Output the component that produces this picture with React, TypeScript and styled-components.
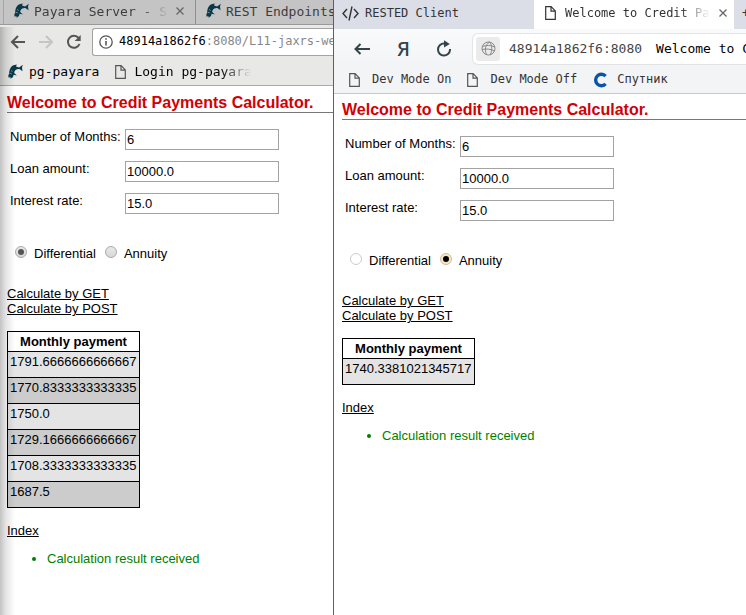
import React, { useState } from "react";
import styled, { createGlobalStyle, css } from "styled-components";

const mono = '"DejaVu Sans Mono", "Liberation Mono", monospace';
const sans = '"Liberation Sans", Arial, sans-serif';

const GlobalStyle = createGlobalStyle`
  * { box-sizing: border-box; }
  body { margin: 0; background: #fff; color: #000; font: 13px/15px ${sans}; }
  button { border: 0; padding: 0; background: none; color: inherit; font: inherit; }
  svg { display: block; flex: none; }
`;

const Desktop = styled.main`
  display: grid;
  grid-template-columns: minmax(0, 333fr) minmax(0, 413fr);
  min-height: 100vh;
  overflow: hidden;
`;

const Window = styled.section<{ $front?: boolean }>`
  min-width: 0;
  overflow: hidden;
  background: #fff;
  ${(p) =>
    p.$front
      ? css`border-left: 1px solid #5f5f5f;`
      : css`
          position: relative;
          &::after {
            content: "";
            position: absolute;
            inset: 27px auto 0 0;
            width: 15px;
            pointer-events: none;
            background: linear-gradient(to right, rgba(0, 0, 0, 0.24), rgba(0, 0, 0, 0.1) 40%, transparent);
          }
        `}
`;

const Bar = styled.div`
  display: flex;
  align-items: center;
  white-space: nowrap;
  overflow: hidden;
  font-family: ${mono};
`;

const PlainTabs = styled(Bar)`
  height: 25px;
  padding-left: 3px;
  align-items: stretch;
  background: #c4c4c4;
  border-bottom: 1px solid #999;
  color: #3d3d3d;
  font-size: 13px;
`;

const PlainTab = styled.div<{ $first?: boolean }>`
  display: flex;
  align-items: center;
  flex: none;
  gap: 3px;
  width: 193px;
  padding: 0 11px 2px 10px;
  border-right: 1px solid #909090;
  border-left: ${(p) => (p.$first ? "1px solid #a5a5a5" : "0")};
`;

const FadeText = styled.span<{ $width: number }>`
  width: ${(p) => p.$width}px;
  flex: none;
  overflow: hidden;
  mask-image: linear-gradient(to right, #000 calc(100% - 30px), transparent);
`;

const CloseButton = styled.button`
  display: grid;
  place-items: center;
  margin-left: auto;
  color: #666;
`;

const PlainToolbar = styled(Bar)`
  height: 33px;
  padding-left: 10px;
  gap: 12px;
  background: #e8e8e6;
  color: #555;
`;

const PlainAddress = styled.div`
  display: flex;
  align-items: center;
  gap: 6px;
  flex: 1 0 auto;
  height: 28px;
  margin-left: -2px;
  padding-left: 6px;
  background: #fff;
  border: 1px solid #a3a3a3;
  border-right: 0;
  border-radius: 3px 0 0 3px;
  color: #888;
  font-size: 12px;
  b { color: #000; font-weight: 400; }
`;

const PlainBookmarks = styled(Bar)`
  height: 28px;
  padding-left: 8px;
  gap: 16px;
  background: #e8e8e6;
  border-bottom: 1px solid #aaa;
  font-size: 13px;
`;

const Bookmark = styled.a<{ $gap: number }>`
  display: flex;
  align-items: center;
  gap: ${(p) => p.$gap}px;
  color: inherit;
  text-decoration: none;
  svg { color: #555; }
`;

const FrontTabs = styled(Bar)`
  height: 29px;
  background: #dcdee7;
  color: #333;
  font-size: 12px;
`;

const FrontTab = styled.div<{ $active?: boolean }>`
  display: flex;
  align-items: center;
  flex: none;
  align-self: stretch;
  gap: ${(p) => (p.$active ? 9 : 6)}px;
  width: 200px;
  padding: 0 16px 3px ${(p) => (p.$active ? 11 : 8)}px;
  background: ${(p) => (p.$active ? "#fff" : "transparent")};
`;

const NewTab = styled.button`
  padding: 0 0 3px 8px;
`;

const FrontToolbar = styled(Bar)`
  height: 37px;
  padding: 2px 0 0 20px;
  background: linear-gradient(#f9fafb, #f3f4f6);
  color: #33444a;
  gap: 26px;
`;

const FrontAddress = styled.div`
  display: flex;
  align-items: center;
  flex: 1 0 auto;
  height: 32px;
  margin-left: -6px;
  padding-left: 3px;
  background: #fff;
  border: 1px solid #e3e4e6;
  border-right: 0;
  border-radius: 6px 0 0 6px;
  color: #444;
  font-size: 13px;
  b { margin-left: 14px; color: #000; font-weight: 400; }
`;

const SiteBadge = styled.button`
  display: grid;
  place-items: center;
  width: 24px;
  height: 24px;
  margin-right: 9px;
  background: #ebebeb;
  border-radius: 3px;
  color: #888;
`;

const FrontBookmarks = styled(Bar)`
  height: 28px;
  padding-left: 15px;
  gap: 16px;
  background: #f3f4f6;
  border-bottom: 1px solid #c8c8ca;
  color: #333;
  font-size: 12px;
`;

const YandexMark = styled.button`
  font: 500 20px/22px "Noto Sans", sans-serif;
`;

const Content = styled.div<{ $front: boolean }>`
  padding: ${(p) => (p.$front ? "7px 0 0 8px" : "8px 0 0 7px")};
`;

const Title = styled.h1`
  margin: 0 0 16px;
  border-bottom: 1px solid #777;
  color: #d20005;
  font-size: 16px;
  line-height: 18px;
  white-space: nowrap;
`;

const Fields = styled.div`
  display: grid;
  grid-template-columns: 110px 154px;
  gap: 11px 5px;
  padding-left: 3px;
  label { white-space: nowrap; }
`;

const TextInput = styled.input`
  height: 21px;
  min-width: 0;
  padding: 0 1px;
  border: 1px solid #a3a3a3;
  background: #fff;
  color: #000;
  font: 13px/15px ${sans};
`;

const Options = styled.div`
  display: flex;
  gap: 9px;
  margin: 32px 0 25px 8px;
  label { display: flex; gap: 7px; }
`;

const Radio = styled.input<{ $warm?: boolean }>`
  appearance: none;
  flex: none;
  display: grid;
  place-items: center;
  width: 12px;
  height: 12px;
  margin: 0;
  border: 1px solid ${(p) => (p.$warm ? "#ccc" : "#aaa")};
  border-radius: 50%;
  background: ${(p) => (p.$warm ? "#fff" : "linear-gradient(#e8e8e8, #d8d8d8)")};
  &:checked { ${(p) => p.$warm && "background: #f8e7c0; border-color: #cdbf9d;"} }
  &:checked::before {
    content: "";
    width: 6px;
    height: 6px;
    border-radius: 50%;
    background: ${(p) => (p.$warm ? "#000" : "#555")};
  }
`;

const Actions = styled.nav`
  display: flex;
  flex-direction: column;
  align-items: flex-start;
`;

const PageLink = styled.a`
  color: #000;
  text-decoration: underline;
`;

const Payments = styled.table`
  margin: 15px 0;
  border-collapse: collapse;
  width: 133px;
  th, td { border: 1px solid #000; padding: 2px; }
  th { height: 20px; text-align: center; }
  td { height: 26px; vertical-align: top; }
  tbody tr:nth-child(odd) { background: #e4e4e4; }
  tbody tr:nth-child(even) { background: #ccc; }
`;

const Messages = styled.ul`
  margin: 13px 0;
  padding-left: 40px;
  color: #008000;
`;

const Fish = () => (
  <svg width="17" height="16" viewBox="0 0 17 16" fill="#08394a">
    <path d="M1.2 8.2C1.4 5 3 2.2 5.4 1.2L8.8.6 8 2.4l3.1 1L14.8.8 14 3.6l.5 3.6-2.7-2C9.5 4.8 7.7 5.6 6.6 7.2L6.2 9l2.6 2.4-3.2-.7L5 13l-2.4 1.8-.2-1.7-1.8.6L.3 11l1-1Z" />
    <path d="m3 6.4 1.5 1.2M2 9.2l1.8.8" stroke="#a9babd" strokeWidth=".7" />
  </svg>
);

const Page = () => (
  <svg width="11" height="14" viewBox="0 0 11 14" fill="none" stroke="currentColor" strokeWidth="1.2">
    <path d="M.7.7h5.4l4.2 4.2v8.4H.7ZM6 .8v4.3h4.2" />
  </svg>
);

const Cross = () => (
  <svg width="8" height="8" viewBox="0 0 8 8" stroke="currentColor" strokeWidth="1.3">
    <path d="m.5.5 7 7M7.5.5l-7 7" />
  </svg>
);

const Arrow = ({ back = false, faint = false }: { back?: boolean; faint?: boolean }) => (
  <svg width="16" height="14" viewBox="0 0 16 14" fill="none" stroke={faint ? "#c5c5c3" : "currentColor"} strokeWidth="2">
    <path d={back ? "M15 7H2M8 1 2 7l6 6" : "M1 7h13M8 1l6 6-6 6"} />
  </svg>
);

const Reload = () => (
  <svg width="16" height="16" viewBox="0 0 16 16" fill="none" stroke="currentColor" strokeWidth="2">
    <path d="M12.6 4A6 6 0 1 0 13.5 10" />
    <path d="M14.7 1v6H8.7Z" fill="currentColor" stroke="none" />
  </svg>
);

const Info = () => (
  <svg width="14" height="14" viewBox="0 0 14 14" fill="none" stroke="#555">
    <circle cx="7" cy="7" r="6.2" strokeWidth="1.3" />
    <path d="M7 6v4.5M7 3.2v1.5" strokeWidth="1.6" />
  </svg>
);

const CodeMark = () => (
  <svg width="17" height="15" viewBox="0 0 17 15" fill="none" stroke="currentColor" strokeWidth="1.4">
    <path d="m5 3-4 4.5L5 12M12 3l4 4.5-4 4.5M10 .5l-3 14" />
  </svg>
);

const ThinBack = () => (
  <svg width="17" height="12" viewBox="0 0 17 12" fill="none" stroke="currentColor" strokeWidth="2">
    <path d="M16 6H2M6.5 1 1.5 6l5 5" />
  </svg>
);

const RoundReload = () => (
  <svg width="16" height="17" viewBox="0 0 16 17" fill="none" stroke="currentColor" strokeWidth="2">
    <path d="M9 3.6H8A6 6 0 1 0 14 10V9" />
    <path d="m8 .2 5.8 3.7L8 7.4Z" fill="currentColor" stroke="none" />
  </svg>
);

const Globe = () => (
  <svg width="15" height="15" viewBox="0 0 15 15" fill="none" stroke="currentColor">
    <circle cx="7.5" cy="7.5" r="6.5" />
    <path d="M8.5 1C4 4 3.5 9 5.5 13.6M8.5 1c3 3.500 3 8.500.5 13M1.500 5.500C5 4 10 4 13.500 6M1 8.500c4-1 9-.5 12.500 1.500" />
  </svg>
);

const Sputnik = () => (
  <svg width="15" height="16" viewBox="0 0 15 16" fill="none" stroke="#0855a5" strokeWidth="3.4">
    <path d="M12.6 4.2A5.7 5.7 0 1 0 12.6 11.8" />
  </svg>
);

type CalculatorProps = { id: string; initial: string; payments: string[]; front?: boolean };

function Calculator({ id, initial, payments, front = false }: CalculatorProps) {
  const [kind, setKind] = useState(initial);
  const fields = [
    ["Number of Months:", "6"],
    ["Loan amount:", "10000.0"],
    ["Interest rate:", "15.0"],
  ];
  return (
    <Content $front={front}>
      <Title>Welcome to Credit Payments Calculator.</Title>
      <Fields>
        {fields.map(([label, value], i) => (
          <React.Fragment key={label}>
            <label htmlFor={`${id}-${i}`}>{label}</label>
            <TextInput id={`${id}-${i}`} defaultValue={value} />
          </React.Fragment>
        ))}
      </Fields>
      <Options>
        {["Differential", "Annuity"].map((name) => (
          <label key={name}>
            <Radio type="radio" name={`${id}-kind`} $warm={front} checked={kind === name} onChange={() => setKind(name)} />
            {name}
          </label>
        ))}
      </Options>
      <Actions>
        <PageLink href="#get">Calculate by GET</PageLink>
        <PageLink href="#post">Calculate by POST</PageLink>
      </Actions>
      <Payments>
        <thead><tr><th>Monthly payment</th></tr></thead>
        <tbody>{payments.map((p) => <tr key={p}><td>{p}</td></tr>)}</tbody>
      </Payments>
      <PageLink href="#index">Index</PageLink>
      <Messages><li>Calculation result received</li></Messages>
    </Content>
  );
}

export default function App() {
  return (
    <>
      <GlobalStyle />
      <Desktop>
        <Window>
          <PlainTabs>
            <PlainTab $first>
              <Fish />
              <FadeText $width={135}>Payara Server - S</FadeText>
              <CloseButton aria-label="Close tab"><Cross /></CloseButton>
            </PlainTab>
            <PlainTab><Fish />REST Endpoints</PlainTab>
          </PlainTabs>
          <PlainToolbar>
            <button aria-label="Back"><Arrow back /></button>
            <button aria-label="Forward"><Arrow faint /></button>
            <button aria-label="Reload"><Reload /></button>
            <PlainAddress><Info /><span><b>48914a1862f6</b>:8080/L11-jaxrs-web</span></PlainAddress>
          </PlainToolbar>
          <PlainBookmarks>
            <Bookmark href="#payara" $gap={4}><Fish />pg-payara</Bookmark>
            <Bookmark href="#login" $gap={8}><Page /><FadeText $width={117}>Login pg-payara</FadeText></Bookmark>
          </PlainBookmarks>
          <Calculator
            id="left"
            initial="Differential"
            payments={["1791.6666666666667", "1770.8333333333335", "1750.0", "1729.1666666666667", "1708.3333333333335", "1687.5"]}
          />
        </Window>
        <Window $front>
          <FrontTabs>
            <FrontTab><CodeMark />RESTED Client</FrontTab>
            <FrontTab $active>
              <Page />
              <FadeText $width={145}>Welcome to Credit Pay</FadeText>
              <CloseButton aria-label="Close tab"><Cross /></CloseButton>
            </FrontTab>
            <NewTab aria-label="New tab">+</NewTab>
          </FrontTabs>
          <FrontToolbar>
            <button aria-label="Back"><ThinBack /></button>
            <YandexMark>Я</YandexMark>
            <button aria-label="Reload"><RoundReload /></button>
            <FrontAddress>
              <SiteBadge aria-label="Site information"><Globe /></SiteBadge>
              48914a1862f6:8080 <b>Welcome to C</b>
            </FrontAddress>
          </FrontToolbar>
          <FrontBookmarks>
            <Bookmark href="#on" $gap={12}><Page />Dev Mode On</Bookmark>
            <Bookmark href="#off" $gap={12}><Page />Dev Mode Off</Bookmark>
            <Bookmark href="#sputnik" $gap={9}><Sputnik />Спутник</Bookmark>
          </FrontBookmarks>
          <Calculator id="right" initial="Annuity" payments={["1740.3381021345717"]} front />
        </Window>
      </Desktop>
    </>
  );
}
